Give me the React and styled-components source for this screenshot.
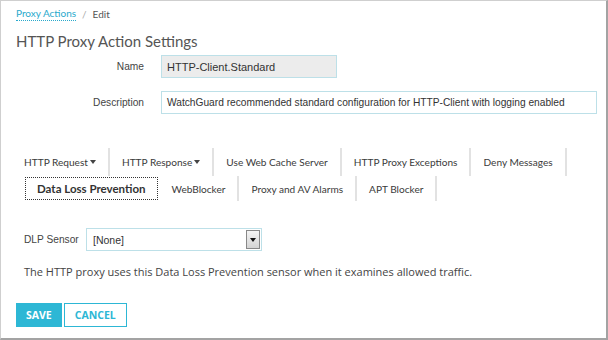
import React from "react";
import styled, { createGlobalStyle } from "styled-components";

const Global = createGlobalStyle`
  html, body { margin: 0; padding: 0; background: #fff; }
  * { box-sizing: border-box; }
`;

const Frame = styled.div`
  width: 608px;
  height: 340px;
  border-top: 1px solid #cfcfcf;
  border-left: 1px solid #cfcfcf;
  border-right: 2px solid #a3a3a3;
  border-bottom: 2px solid #a3a3a3;
  padding: 5px 0 0 15px;
  font-family: Lato, "Open Sans", sans-serif;
  color: #444;
  overflow: hidden;
`;

const Crumbs = styled.div`
  display: flex;
  align-items: center;
  gap: 6px;
  font-size: 10px;
  height: 16px;
  color: #555;
`;

const CrumbLink = styled.a`
  color: #2aa9cc;
  text-decoration: none;
  border-bottom: 1px dotted #2aa9cc;
  line-height: 13px;
`;

const Sep = styled.span`
  color: #aaa;
`;

const Title = styled.h1`
  margin: 8px 0 0 0;
  font-size: 15px;
  font-weight: 400;
  color: #555;
  line-height: 22px;
`;

const FormRow = styled.div`
  display: flex;
  align-items: center;
  margin-top: ${(p) => p.$mt}px;
`;

const Label = styled.label`
  width: 128px;
  text-align: right;
  font-family: "Liberation Sans", Arial, sans-serif;
  font-size: 10.2px;
  color: #444;
  margin-right: 17px;
`;

const TextBox = styled.div`
  width: ${(p) => p.$w}px;
  height: 23px;
  border: 1px solid #bde0e8;
  background: ${(p) => (p.$disabled ? "#ececec" : "#fff")};
  font-family: "Liberation Sans", Arial, sans-serif;
  font-size: ${(p) => p.$fs}px;
  color: #333;
  display: flex;
  align-items: center;
  padding-left: 5px;
  white-space: nowrap;
  overflow: hidden;
`;

const Tabs = styled.div`
  margin-top: 34px;
  padding-left: 8px;
  display: flex;
  flex-direction: column;
`;

const TabRow = styled.div`
  display: flex;
  height: ${(p) => p.$h}px;
`;

const Tab = styled.div`
  display: flex;
  align-items: center;
  padding: 0 12px;
  padding-left: ${(p) => (p.$first ? 0 : 12)}px;
  border-right: 2px solid #e2e2e2;
  font-size: 10.1px;
  color: #3a3a3a;
  white-space: nowrap;
`;

const ActiveTab = styled.div`
  display: flex;
  align-items: center;
  margin: 1px 2px 1px 1px;
  padding: 0 11px;
  border: 1px dotted #333;
  font-size: 11.5px;
  font-weight: 700;
  color: #333;
  white-space: nowrap;
`;

const Caret = styled.span`
  display: inline-block;
  width: 0;
  height: 0;
  margin-left: 2px;
  border-left: 3px solid transparent;
  border-right: 3px solid transparent;
  border-top: 4px solid #444;
`;

const SensorRow = styled.div`
  display: flex;
  align-items: center;
  margin-top: 27px;
  padding-left: 8px;
`;

const SensorLabel = styled.span`
  font-family: "Liberation Sans", Arial, sans-serif;
  font-size: 10.2px;
  color: #444;
  width: 62px;
`;

const Select = styled.div`
  width: 176px;
  height: 23px;
  border: 1px solid #bde0e8;
  display: flex;
  align-items: stretch;
  font-family: "Liberation Sans", Arial, sans-serif;
  font-size: 10.5px;
  color: #333;
`;

const SelectText = styled.span`
  flex: 1;
  display: flex;
  align-items: center;
  padding-left: 6px;
`;

const SelectBtn = styled.span`
  width: 14px;
  margin: 1px;
  border: 1px solid #888;
  background: linear-gradient(#f4f4f4, #d4d4d4);
  display: flex;
  align-items: center;
  justify-content: center;
`;

const SmallCaret = styled.span`
  width: 0;
  height: 0;
  border-left: 3px solid transparent;
  border-right: 3px solid transparent;
  border-top: 4px solid #111;
`;

const Help = styled.p`
  margin: 13px 0 0 8px;
  font-family: "Open Sans", sans-serif;
  font-size: 11px;
  line-height: 15px;
  color: #444;
`;

const Buttons = styled.div`
  display: flex;
  gap: 2px;
  margin-top: 24px;
`;

const Button = styled.button`
  height: 24px;
  padding: 0 ${(p) => p.$px}px;
  font-family: "Open Sans", sans-serif;
  font-weight: 700;
  font-size: 10.5px;
  border: 1px solid #2db7d5;
  background: ${(p) => (p.$primary ? "#2db7d5" : "#fff")};
  color: ${(p) => (p.$primary ? "#fff" : "#2db7d5")};
  cursor: pointer;
`;

export default function App() {
  return (
    <>
      <Global />
      <Frame>
        <Crumbs>
          <CrumbLink href="#">Proxy Actions</CrumbLink>
          <Sep>/</Sep>
          <span>Edit</span>
        </Crumbs>
        <Title>HTTP Proxy Action Settings</Title>
        <FormRow $mt={3}>
          <Label>Name</Label>
          <TextBox $w={176} $fs={11} $disabled>HTTP-Client.Standard</TextBox>
        </FormRow>
        <FormRow $mt={13}>
          <Label>Description</Label>
          <TextBox $w={436} $fs={10.2}>WatchGuard recommended standard configuration for HTTP-Client with logging enabled</TextBox>
        </FormRow>
        <Tabs>
          <TabRow $h={28}>
            <Tab $first>HTTP Request<Caret /></Tab>
            <Tab>HTTP Response<Caret /></Tab>
            <Tab>Use Web Cache Server</Tab>
            <Tab>HTTP Proxy Exceptions</Tab>
            <Tab>Deny Messages</Tab>
          </TabRow>
          <TabRow $h={25}>
            <ActiveTab>Data Loss Prevention</ActiveTab>
            <Tab>WebBlocker</Tab>
            <Tab>Proxy and AV Alarms</Tab>
            <Tab>APT Blocker</Tab>
          </TabRow>
        </Tabs>
        <SensorRow>
          <SensorLabel>DLP Sensor</SensorLabel>
          <Select>
            <SelectText>[None]</SelectText>
            <SelectBtn><SmallCaret /></SelectBtn>
          </Select>
        </SensorRow>
        <Help>The HTTP proxy uses this Data Loss Prevention sensor when it examines allowed traffic.</Help>
        <Buttons>
          <Button $primary $px={9}>SAVE</Button>
          <Button $px={10}>CANCEL</Button>
        </Buttons>
      </Frame>
    </>
  );
}
